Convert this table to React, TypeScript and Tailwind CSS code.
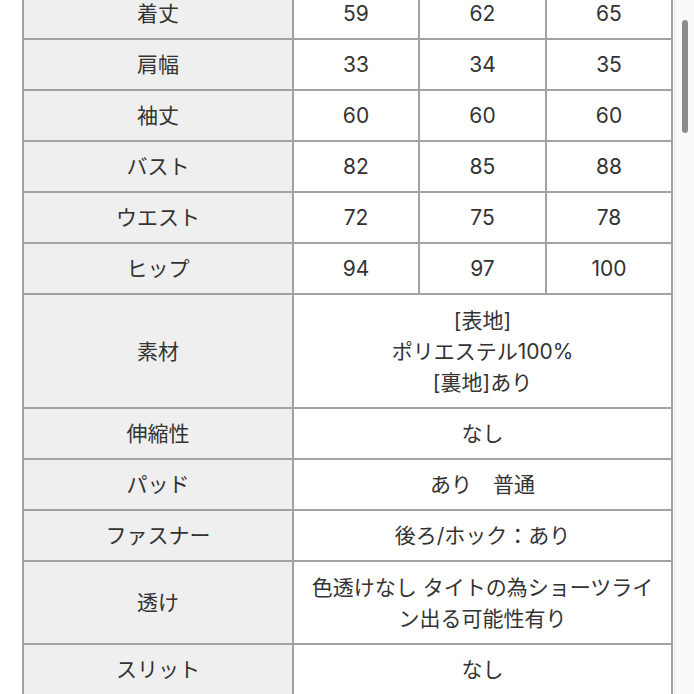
import React from "react";

const font = { fontFamily: 'Inter, "Noto Sans CJK JP", sans-serif' };

type Row = { label: string; values?: string[]; span?: React.ReactNode; h: string };

const rows: Row[] = [
  { label: "着丈", values: ["59", "62", "65"], h: "h-[49px]" },
  { label: "肩幅", values: ["33", "34", "35"], h: "h-[49px]" },
  { label: "袖丈", values: ["60", "60", "60"], h: "h-[49px]" },
  { label: "バスト", values: ["82", "85", "88"], h: "h-[49px]" },
  { label: "ウエスト", values: ["72", "75", "78"], h: "h-[49px]" },
  { label: "ヒップ", values: ["94", "97", "100"], h: "h-[49px]" },
  {
    label: "素材",
    span: (
      <>
        <div>[表地]</div>
        <div>ポリエステル100%</div>
        <div>[裏地]あり</div>
      </>
    ),
    h: "h-[112px]",
  },
  { label: "伸縮性", span: "なし", h: "h-[49px]" },
  { label: "パッド", span: "あり　普通", h: "h-[49px]" },
  { label: "ファスナー", span: "後ろ/ホック：あり", h: "h-[49px]" },
  { label: "透け", span: "色透けなし タイトの為ショーツライン出る可能性有り", h: "h-[81px]" },
  { label: "スリット", span: "なし", h: "h-[49px]" },
];

export default function App() {
  return (
    <div className="w-[694px] h-[694px] overflow-hidden bg-white flex text-[#333333] text-[21px] leading-[31px]" style={font}>
      <div className="w-[674px] h-full overflow-hidden">
        <div className="ml-[22px] -mt-[13px] w-[651px] bg-[#a2a2a2] p-[2px] grid grid-cols-[268px_124px_125px_124px] gap-[2px]">
          {rows.map((r) => (
            <React.Fragment key={r.label}>
              <div className={`${r.h} bg-[#efefef] flex items-center justify-center`}>{r.label}</div>
              {r.values ? (
                r.values.map((v, i) => (
                  <div key={i} className={`${r.h} bg-white flex items-center justify-center`}>
                    {v}
                  </div>
                ))
              ) : (
                <div className={`${r.h} col-span-3 bg-white flex flex-col items-center justify-center text-center px-3`}>
                  {r.span}
                </div>
              )}
            </React.Fragment>
          ))}
        </div>
      </div>
      <div className="w-[20px] h-full bg-[#fafafa] border-l border-[#e6e6e6] pt-[20px] pl-[7px]">
        <div className="w-[6px] h-[113px] rounded-full bg-[#8c8c8c]" />
      </div>
    </div>
  );
}
